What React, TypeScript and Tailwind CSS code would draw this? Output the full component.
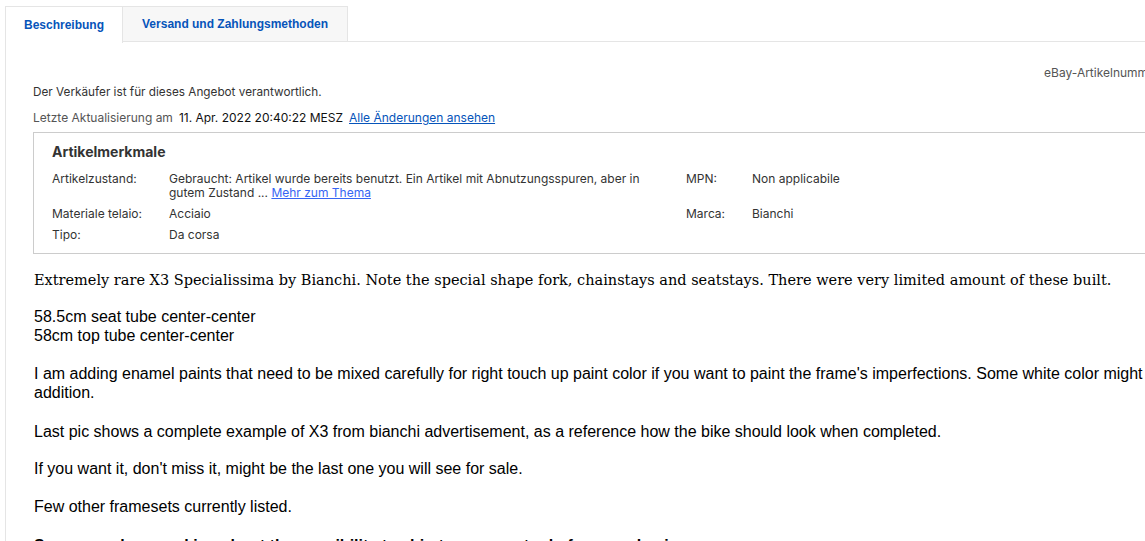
import React from "react";

const ui = { fontFamily: 'Inter, "Liberation Sans", Arial, sans-serif' };
const tabFont = { fontFamily: '"Liberation Sans", Arial, sans-serif' };

const specs: { label: string; value: React.ReactNode }[][] = [
  [
    {
      label: "Artikelzustand:",
      value: (
        <>
          Gebraucht: Artikel wurde bereits benutzt. Ein Artikel mit Abnutzungsspuren, aber in gutem Zustand ...{" "}
          <a className="text-[#3665f3] underline">Mehr zum Thema</a>
        </>
      ),
    },
    { label: "MPN:", value: "Non applicabile" },
  ],
  [
    { label: "Materiale telaio:", value: "Acciaio" },
    { label: "Marca:", value: "Bianchi" },
  ],
  [{ label: "Tipo:", value: "Da corsa" }],
];

export default function App() {
  return (
    <div className="w-[1145px] h-[541px] overflow-hidden bg-white" style={ui}>
      <div className="w-[1300px] pl-[5px] pt-[6px]">
        {/* Tabs */}
        <div className="flex items-end" style={tabFont}>
          <div className="h-[37px] px-[18px] flex items-center border border-b-0 border-[#e5e5e5] bg-white text-[12px] font-bold text-[#0654ba] -mb-px relative">
            Beschreibung
          </div>
          <div className="h-[36px] px-[19px] flex items-center border border-l-0 border-[#e5e5e5] bg-[#f7f7f7] text-[12px] font-bold text-[#0654ba]">
            Versand und Zahlungsmethoden
          </div>
          <div className="flex-1 border-b border-[#e5e5e5]" />
        </div>

        {/* Panel */}
        <div className="border-l border-[#e5e5e5] pl-[27px] pr-[50px]">
          <div className="flex justify-end pt-[24px] text-[12px] text-[#555] leading-[14px]">
            eBay-Artikelnummer: 154912345678
          </div>
          <div className="mt-[5px] text-[11.75px] text-[#333] leading-[14px]">
            Der Verkäufer ist für dieses Angebot verantwortlich.
          </div>
          <div className="mt-[12px] text-[12px] leading-[14px] flex gap-[6px]">
            <span className="text-[#555]">Letzte Aktualisierung am</span>
            <span className="text-[#111]">11. Apr. 2022 20:40:22 MESZ</span>
            <a className="text-[#0654ba] underline">Alle Änderungen ansehen</a>
          </div>

          {/* Item specifics */}
          <div className="mt-[7px] border border-[#ccc] pl-[18px] pt-[10px] pb-[11px]">
            <h2 className="text-[14px] font-bold text-[#333] leading-[18px]">Artikelmerkmale</h2>
            <div className="mt-[11px] flex flex-col gap-[7px] text-[12px] text-[#333] leading-[14px]">
              {specs.map((row, i) => (
                <div key={i} className="flex">
                  {row.map((cell, j) => (
                    <div key={j} className={`flex ${j === 0 ? "w-[634px]" : ""}`}>
                      <div className={j === 0 ? "w-[117px] shrink-0" : "w-[66px] shrink-0"}>{cell.label}</div>
                      <div className={j === 0 ? "w-[482px]" : ""}>{cell.value}</div>
                    </div>
                  ))}
                </div>
              ))}
            </div>
          </div>

          {/* Description */}
          <div className="mt-[18px] pl-px text-black">
            <p className="text-[14.5px] leading-[17px]" style={{ fontFamily: '"DejaVu Serif", serif' }}>
              Extremely rare X3 Specialissima by Bianchi. Note the special shape fork, chainstays and seatstays. There were very limited amount of these built.
            </p>
            <div className="mt-[18px] text-[16px] leading-[19px]" style={{ fontFamily: '"Liberation Sans", Arial, sans-serif' }}>
              <p>
                58.5cm seat tube center-center
                <br />
                58cm top tube center-center
              </p>
              <p className="mt-[19px] w-[1200px]">
                I am adding enamel paints that need to be mixed carefully for right touch up paint color if you want to paint the frame's imperfections. Some white color might be a nice addition.
              </p>
              <p className="mt-[20px]">
                Last pic shows a complete example of X3 from bianchi advertisement, as a reference how the bike should look when completed.
              </p>
              <p className="mt-[18px]">If you want it, don't miss it, might be the last one you will see for sale.</p>
              <p className="mt-[19px]">Few other framesets currently listed.</p>
              <p className="mt-[20px] font-bold">
                Some people are asking about the possibility to ship to my country before purchasing.
              </p>
            </div>
          </div>
        </div>
      </div>
    </div>
  );
}
